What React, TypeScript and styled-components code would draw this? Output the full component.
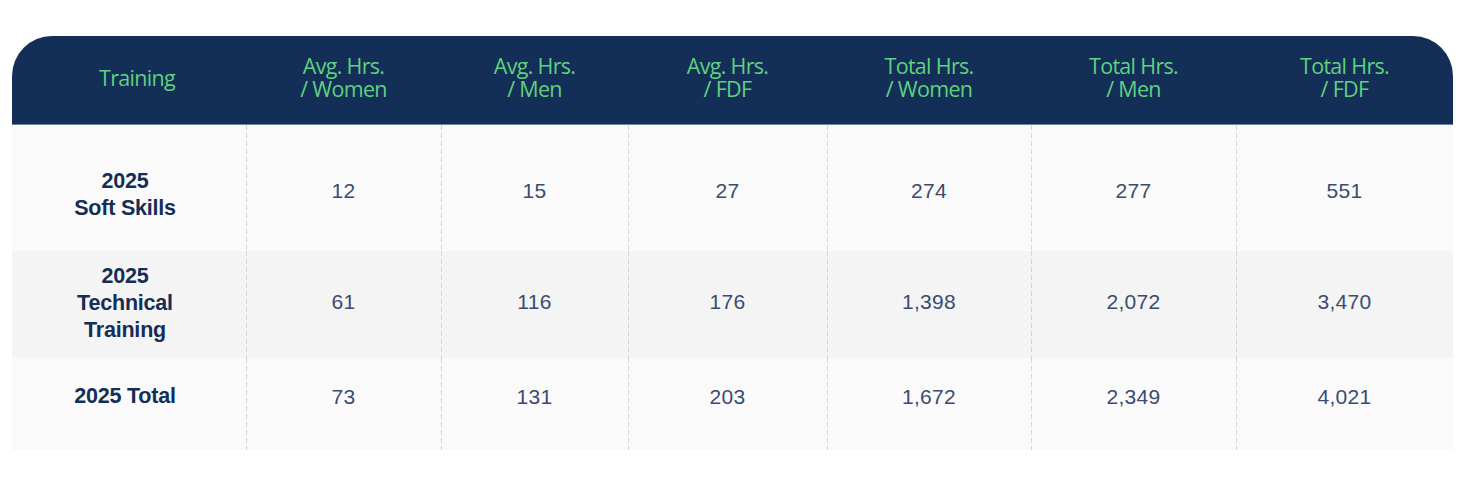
import React from "react";
import styled, { createGlobalStyle } from "styled-components";

const Global = createGlobalStyle`
  html, body { margin: 0; padding: 0; background: #ffffff; }
  body { font-family: "Liberation Sans", Arial, sans-serif; }
`;

const Page = styled.div`
  padding: 36px 12px 0 12px;
  width: 1441px;
`;

const Table = styled.div`
  display: grid;
  grid-template-columns: 234px 195px 187px 199px 204px 205px 217px;
`;

const HeadCell = styled.div<{ $first?: boolean; $left?: boolean; $right?: boolean }>`
  height: 89px;
  background: #132e57;
  border-bottom: 1px solid #6f80a0;
  display: flex;
  align-items: center;
  justify-content: center;
  text-align: center;
  color: #5fd17f;
  font-family: "Open Sans", "Noto Sans", sans-serif;
  font-size: 21.5px;
  line-height: 23px;
  letter-spacing: -0.7px;
  padding-left: ${(p) => (p.$first ? "16px" : "0")};
  padding-bottom: 6px;
  box-sizing: border-box;
  border-top-left-radius: ${(p) => (p.$left ? "40px" : "0")};
  border-top-right-radius: ${(p) => (p.$right ? "40px" : "0")};
`;

const Cell = styled.div<{ $shade: string; $h: number; $divider?: boolean; $shift: number }>`
  height: ${(p) => p.$h}px;
  display: flex;
  align-items: center;
  justify-content: center;
  text-align: center;
  box-sizing: border-box;
  padding-top: ${(p) => (p.$shift > 0 ? p.$shift * 2 : 0)}px;
  padding-bottom: ${(p) => (p.$shift < 0 ? -p.$shift * 2 : 0)}px;
  background: ${(p) =>
    p.$divider
      ? `linear-gradient(to bottom, #d4d4d4 0 5px, transparent 5px 8px) left top / 1px 8px repeat-y, ${p.$shade}`
      : p.$shade};
`;

const Label = styled.span`
  font-weight: bold;
  color: #142e55;
  font-size: 21.5px;
  line-height: 27px;
  padding-right: 8px;
  letter-spacing: -0.2px;
`;

const Num = styled.span`
  color: #3b4b70;
  font-size: 21px;
  line-height: 24px;
  letter-spacing: 0.3px;
`;

const headers = [
  ["Training"],
  ["Avg. Hrs.", "/ Women"],
  ["Avg. Hrs.", "/ Men"],
  ["Avg. Hrs.", "/ FDF"],
  ["Total Hrs.", "/ Women"],
  ["Total Hrs.", "/ Men"],
  ["Total Hrs.", "/ FDF"],
];

const rows = [
  { label: ["2025", "Soft Skills"], values: ["12", "15", "27", "274", "277", "551"], shade: "#fafafa", h: 126, labelShift: 7, numShift: 2.5 },
  { label: ["2025", "Technical", "Training"], values: ["61", "116", "176", "1,398", "2,072", "3,470"], shade: "#f4f4f4", h: 107, labelShift: -1.5, numShift: -2.5 },
  { label: ["2025 Total"], values: ["73", "131", "203", "1,672", "2,349", "4,021"], shade: "#fafafa", h: 92, labelShift: -7.5, numShift: -7.5 },
];

export default function App() {
  return (
    <>
      <Global />
      <Page>
        <Table>
          {headers.map((h, i) => (
            <HeadCell key={i} $first={i === 0} $left={i === 0} $right={i === headers.length - 1}>
              <div>
                {h.map((line, j) => (
                  <div key={j}>{line}</div>
                ))}
              </div>
            </HeadCell>
          ))}
          {rows.map((r, ri) => (
            <React.Fragment key={ri}>
              <Cell $shade={r.shade} $h={r.h} $shift={r.labelShift}>
                <Label>
                  {r.label.map((l, k) => (
                    <div key={k}>{l}</div>
                  ))}
                </Label>
              </Cell>
              {r.values.map((v, vi) => (
                <Cell key={vi} $shade={r.shade} $h={r.h} $shift={r.numShift} $divider>
                  <Num>{v}</Num>
                </Cell>
              ))}
            </React.Fragment>
          ))}
        </Table>
      </Page>
    </>
  );
}
